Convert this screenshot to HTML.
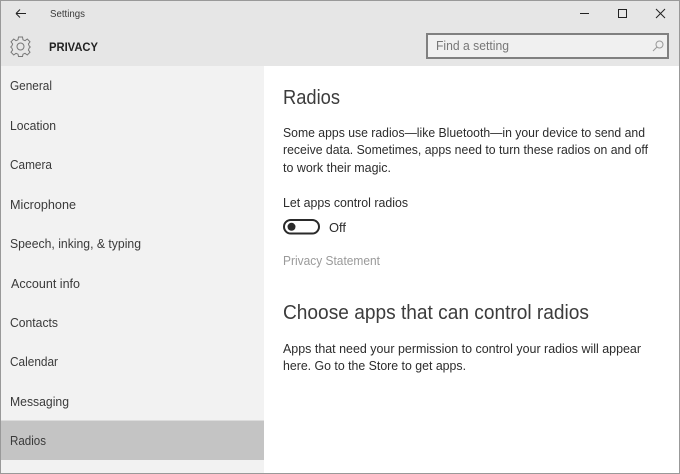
<!DOCTYPE html>
<html><head><meta charset="utf-8"><style>
html,body{margin:0;padding:0;background:#fff;width:680px;height:474px;overflow:hidden}
svg{display:block}
text{font-family:"Liberation Sans",sans-serif;font-size:12.5px;fill:#3a3a3a}
.h{font-size:20px;fill:#3c3c3c}
.b{font-size:12.5px;fill:#2c2c2c}
</style></head><body>
<svg width="680" height="474" viewBox="0 0 680 474" xmlns="http://www.w3.org/2000/svg">
<rect width="680" height="474" fill="#fff"/>
<rect x="0" y="0" width="680" height="66" fill="#e6e6e6"/>
<rect x="0" y="66" width="264" height="408" fill="#f2f2f2"/>
<rect x="0" y="421" width="264" height="39" fill="#c4c4c4"/>
<rect x="0" y="420" width="264" height="1" fill="#dcdcdc"/>
<!-- border -->
<rect x="0" y="0" width="680" height="1" fill="#999"/>
<rect x="0" y="0" width="1" height="474" fill="#999"/>
<rect x="679" y="0" width="1" height="474" fill="#999"/>
<rect x="0" y="473" width="680" height="1" fill="#999"/>
<!-- back -->
<path d="M16 13.5H26M16 13.5L20 9.5M16 13.5L20 17.5" fill="none" stroke="#222" stroke-width="1"/>
<text x="50" y="17" style="font-size:10.5px" textLength="35" lengthAdjust="spacingAndGlyphs">Settings</text>
<!-- gear -->
<g fill="none" stroke="#777" stroke-width="1">
<circle cx="20.5" cy="46.5" r="3.5"/>
<path d="M18.5 37H22.5L23 39.8L25 40.7L27.3 39L30 41.8L28.4 44L29.2 46L30 46.5V47.5L29.2 48L28.4 50L30 52.2L27.3 55L25 53.3L23 54.2L22.5 56.5H18.5L18 54.2L16 53.3L13.7 55L11 52.2L12.6 50L11.8 48L11 47.5V46.5L11.8 46L12.6 44L11 41.8L13.7 39L16 40.7L18 39.8Z"/>
</g>
<text x="49" y="51" style="font-size:12px;font-weight:bold;fill:#222" textLength="49" lengthAdjust="spacingAndGlyphs">PRIVACY</text>
<!-- window controls -->
<rect x="580" y="13" width="9" height="1" fill="#222"/>
<rect x="618.5" y="9.5" width="8" height="8" fill="none" stroke="#222" stroke-width="1"/>
<path d="M656 9L665 18M665 9L656 18" stroke="#222" stroke-width="1" fill="none"/>
<!-- search -->
<rect x="427" y="34" width="241" height="24" fill="#f0f0f0" stroke="#808080" stroke-width="2"/>
<text x="436" y="50" style="font-size:12.5px;fill:#777" textLength="73" lengthAdjust="spacingAndGlyphs">Find a setting</text>
<g fill="none" stroke="#999" stroke-width="1"><circle cx="659.5" cy="44.5" r="3.5"/><path d="M657 47L653 51"/></g>
<!-- sidebar -->
<text x="10" y="90" textLength="42" lengthAdjust="spacingAndGlyphs">General</text>
<text x="10" y="130" textLength="46" lengthAdjust="spacingAndGlyphs">Location</text>
<text x="10" y="169" textLength="42" lengthAdjust="spacingAndGlyphs">Camera</text>
<text x="10" y="209" textLength="66" lengthAdjust="spacingAndGlyphs">Microphone</text>
<text x="10" y="248" textLength="131" lengthAdjust="spacingAndGlyphs">Speech, inking, &amp; typing</text>
<text x="11" y="288" textLength="69" lengthAdjust="spacingAndGlyphs">Account info</text>
<text x="10" y="327" textLength="48" lengthAdjust="spacingAndGlyphs">Contacts</text>
<text x="10" y="366" textLength="48" lengthAdjust="spacingAndGlyphs">Calendar</text>
<text x="10" y="406" textLength="59" lengthAdjust="spacingAndGlyphs">Messaging</text>
<text x="10" y="445" textLength="36" lengthAdjust="spacingAndGlyphs">Radios</text>
<!-- content -->
<text class="h" x="283" y="104" textLength="57" lengthAdjust="spacingAndGlyphs">Radios</text>
<text class="b" x="283" y="137" textLength="362" lengthAdjust="spacingAndGlyphs">Some apps use radios—like Bluetooth—in your device to send and</text>
<text class="b" x="283" y="154" textLength="365" lengthAdjust="spacingAndGlyphs">receive data. Sometimes, apps need to turn these radios on and off</text>
<text class="b" x="283" y="172" textLength="108" lengthAdjust="spacingAndGlyphs">to work their magic.</text>
<text class="b" x="283" y="207" textLength="125" lengthAdjust="spacingAndGlyphs">Let apps control radios</text>
<rect x="284" y="220" width="35" height="13.5" rx="6.75" fill="none" stroke="#2a2a2a" stroke-width="2"/>
<circle cx="291.5" cy="226.8" r="4" fill="#2a2a2a"/>
<text class="b" x="329" y="232" textLength="17" lengthAdjust="spacingAndGlyphs">Off</text>
<text x="283" y="265" style="font-size:12.5px;fill:#9a9a9a" textLength="97" lengthAdjust="spacingAndGlyphs">Privacy Statement</text>
<text class="h" x="283" y="319" textLength="306" lengthAdjust="spacingAndGlyphs">Choose apps that can control radios</text>
<text class="b" x="283" y="353" textLength="358" lengthAdjust="spacingAndGlyphs">Apps that need your permission to control your radios will appear</text>
<text class="b" x="283" y="370" textLength="183" lengthAdjust="spacingAndGlyphs">here. Go to the Store to get apps.</text>
</svg>
</body></html>
